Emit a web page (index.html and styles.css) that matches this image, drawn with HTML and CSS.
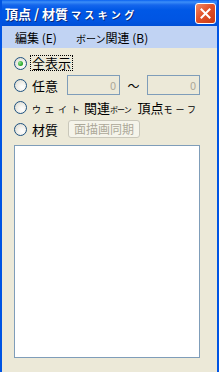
FILE: index.html
```html
<!DOCTYPE html>
<html lang="ja">
<head>
  <meta charset="UTF-8">
  <title>頂点 / 材質マスキング</title>
  <link rel="stylesheet" href="styles.css">
</head>
<body>
  <div class="window">
    <div class="titlebar">
      <span class="title">頂点 / 材質<span class="kana">マスキング</span></span>
      <button class="close" title="閉じる">
        <svg width="11" height="11" viewBox="0 0 11 11">
          <path d="M1.5 1.5 L9.5 9.5 M9.5 1.5 L1.5 9.5" stroke="#fff" stroke-width="2" stroke-linecap="square"/>
        </svg>
      </button>
    </div>
    <div class="menubar">
      <span class="menu-item">編集 (<u>E</u>)</span>
      <span class="menu-item"><span class="kana-menu">ボーン</span>関連 (<u>B</u>)</span>
    </div>
    <div class="content">
      <label class="row">
        <span class="radio checked"></span>
        <span class="focus">全表示</span>
      </label>
      <div class="row">
        <span class="radio"></span>
        <span class="label">任意</span>
        <span class="field field-first">0</span>
        <span class="tilde">～</span>
        <span class="field">0</span>
      </div>
      <div class="row">
        <span class="radio"></span>
        <span class="label"><span class="kana-wide">ウエイト</span>関連<span class="kana-tight">ボーン</span> 頂点<span class="kana-mid">モーフ</span></span>
      </div>
      <div class="row">
        <span class="radio"></span>
        <span class="label">材質</span>
        <button class="btn" disabled>面描画同期</button>
      </div>
      <div class="listbox"></div>
    </div>
  </div>
</body>
</html>
```

FILE: styles.css
```css
body {
  margin: 0;
  background: #ece9d8;
  font-family: "Noto Sans CJK JP", "Liberation Sans", sans-serif;
}
.window {
  width: 219px;
  height: 372px;
  box-sizing: border-box;
  border-left: 2px solid #0054e3;
  border-right: 2px solid #0054e3;
  background: #ece9d8;
  overflow: hidden;
}
.titlebar {
  height: 26px;
  margin: 0 -2px;
  padding: 0 3px 0 5px;
  display: flex;
  align-items: center;
  justify-content: space-between;
  background: linear-gradient(#0a61f0 0, #3c8ef8 2px, #1566ec 5px, #0058e6 10px, #0055e3 20px, #004fd6 26px);
}
.title {
  color: #fff;
  font-weight: bold;
  font-size: 13px;
  letter-spacing: 0;
  text-shadow: 1px 1px 0 #0a2a7a;
  white-space: nowrap;
}
.title .kana {
  font-size: 10px;
  letter-spacing: 3.4px;
  margin-left: 3px;
}
.close {
  width: 21px;
  height: 21px;
  padding: 0;
  border: 1px solid #fff;
  border-radius: 3px;
  background: linear-gradient(135deg, #f08a68, #e2512a 45%, #c83b14);
  display: flex;
  align-items: center;
  justify-content: center;
  margin-top: 1px;
}
.menubar {
  height: 22px;
  display: flex;
  align-items: center;
  background: #c1d3f3;
  font-size: 12px;
  color: #000;
}
.menu-item {
  white-space: nowrap;
}
.menu-item:first-child {
  margin-left: 13px;
  width: 61px;
}
.menu-item u {
  text-decoration: none;
}
.kana-menu {
  font-size: 10px;
  letter-spacing: 0;
}
.content {
  padding: 4px 0 0 12px;
  font-size: 13px;
}
.row {
  height: 22px;
  display: flex;
  align-items: center;
  white-space: nowrap;
}
.radio {
  width: 11px;
  height: 11px;
  border: 1px solid #1c5180;
  border-radius: 50%;
  background: radial-gradient(circle at 65% 65%, #fff 0, #f2f1ec 40%, #d6d4c8 100%);
  display: flex;
  align-items: center;
  justify-content: center;
  flex: none;
}
.radio.checked::after {
  content: "";
  width: 5px;
  height: 5px;
  border-radius: 50%;
  background: radial-gradient(circle at 35% 35%, #8fe28f, #21a121 70%);
}
.focus {
  margin-left: 3px;
  padding: 0 1px;
  border: 1px dotted #000;
  line-height: 14px;
}
.label {
  margin-left: 5px;
}
.field {
  width: 51px;
  height: 18px;
  border: 1px solid #7f9db9;
  color: #aca899;
  font-size: 11px;
  text-align: right;
  padding-right: 3px;
  box-sizing: border-box;
  width: 53px;
  height: 20px;
  line-height: 18px;
}
.field-first {
  margin-left: 9px;
}
.tilde {
  width: 27px;
  text-align: center;
  font-size: 12px;
}
.kana-wide {
  font-size: 9px;
  letter-spacing: 4px;
}
.kana-tight {
  font-size: 8px;
  letter-spacing: -1px;
  margin-right: 4px;
}
.kana-mid {
  font-size: 9px;
  letter-spacing: 3px;
}
.btn {
  margin-left: 10px;
  width: 72px;
  height: 18px;
  padding: 0;
  border: 1px solid #c9c7ba;
  border-radius: 3px;
  background: #f5f4ea;
  color: #aca899;
  font-family: inherit;
  font-size: 12px;
  line-height: 16px;
}
.listbox {
  margin-top: 5px;
  width: 186px;
  height: 213px;
  box-sizing: border-box;
  border: 1px solid #7f9db9;
  background: #fff;
}
```
